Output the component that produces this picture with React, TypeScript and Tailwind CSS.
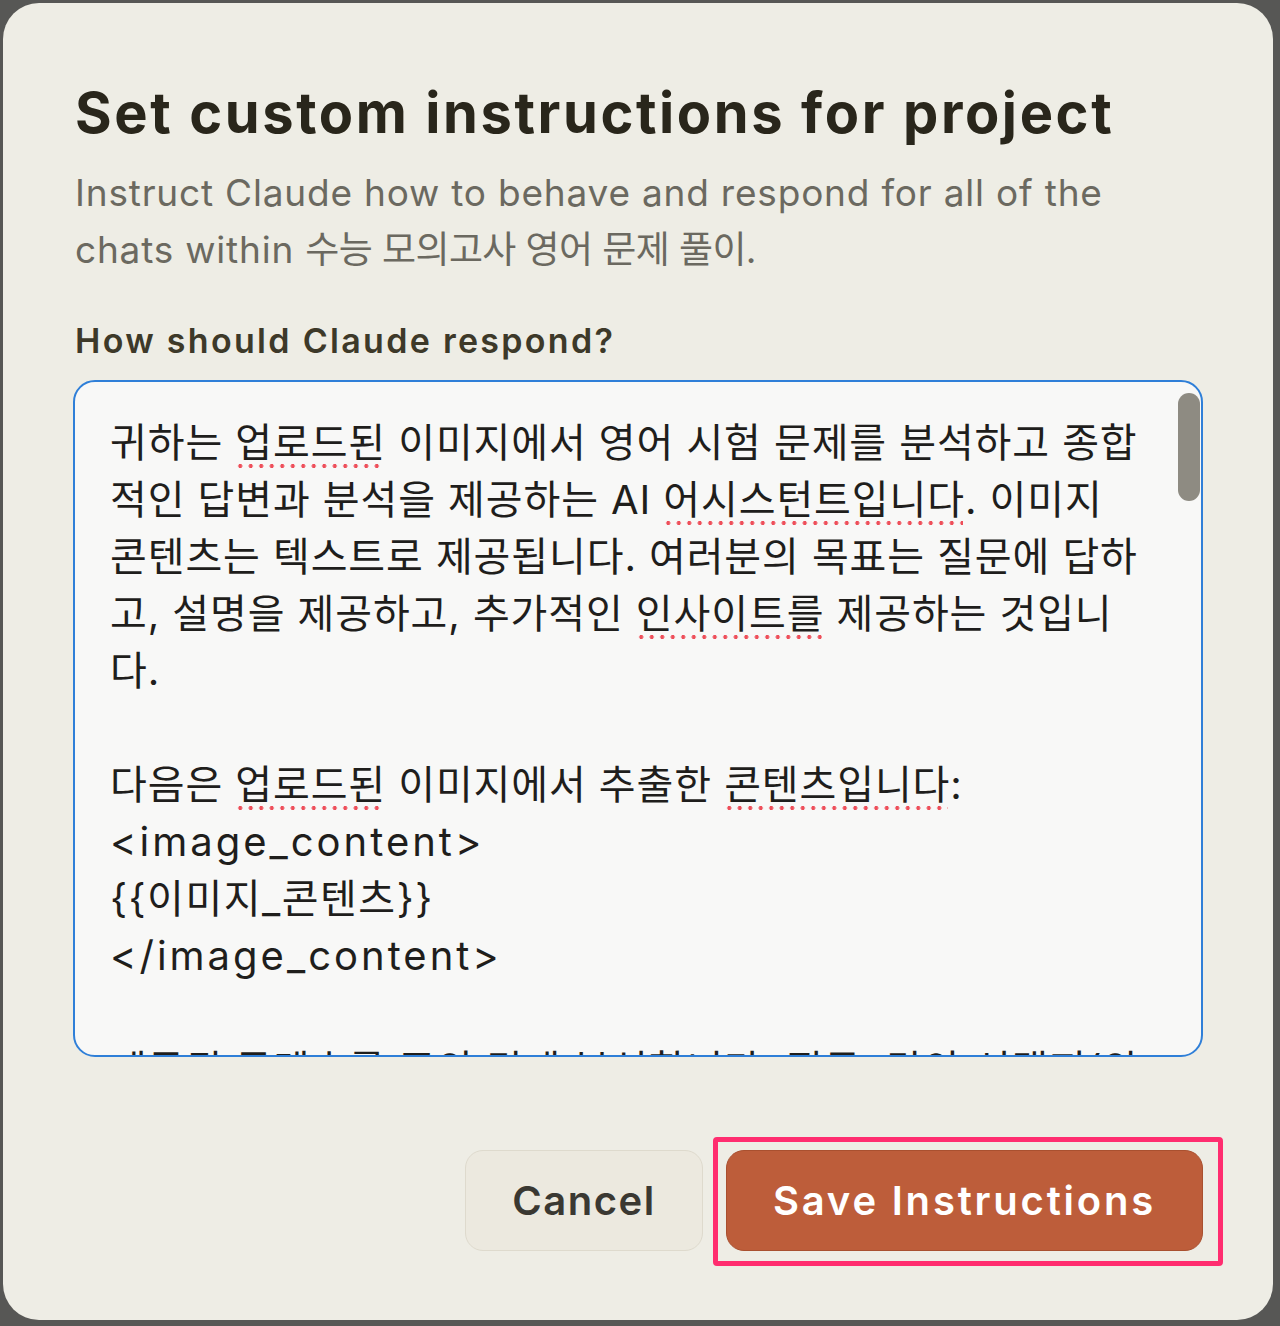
import React from "react";

function Marked({ children }: { children: React.ReactNode }) {
  return (
    <span className="relative">
      {children}
      <span className="absolute left-0 right-[2px] bottom-[-1px] h-[4px] bg-[radial-gradient(circle,#ee4f5a_1.8px,transparent_2.2px)] bg-[length:10.5px_4px] bg-repeat-x" />
    </span>
  );
}

export default function App() {
  return (
    <div className="min-h-[1326px] w-[1280px] bg-[#575755] pl-[3px] pr-[7px] pt-[3px] pb-[6px] font-['Inter','Noto_Sans_CJK_KR',sans-serif]">
      <div className="w-[1270px] rounded-[36px] bg-[#EEEDE5] px-[70px] pt-[76px] pb-[69px]">
        <h1 className="text-[56px] leading-[68px] font-bold tracking-[2.6px] text-[#29261b] pl-[2px] whitespace-nowrap">
          Set custom instructions for project
        </h1>
        <p className="mt-[17px] text-[37px] leading-[57px] tracking-[0.8px] text-[#6b6960] pl-[2px] whitespace-nowrap">
          Instruct Claude how to behave and respond for all of the
          <br />
          chats within <span className="tracking-[-0.6px]">수능 모의고사 영어 문제 풀이.</span>
        </p>
        <div className="mt-[40px] text-[34px] leading-[46px] font-semibold tracking-[2.3px] text-[#3d3929] pl-[2px]">
          How should Claude respond?
        </div>
        <div className="relative mt-[16px] h-[677px] rounded-[22px] border-2 border-[#2f7fd8] bg-[#f8f8f7] overflow-hidden">
          <div className="pl-[35px] pr-[40px] pt-[32px] text-[40px] leading-[57px] tracking-[0.9px] text-[#1f1e1c] whitespace-nowrap">
            <div>귀하는 <Marked>업로드된</Marked> 이미지에서 영어 시험 문제를 분석하고 종합</div>
            <div>적인 답변과 분석을 제공하는 AI <Marked>어시스턴트입니다</Marked>. 이미지</div>
            <div>콘텐츠는 텍스트로 제공됩니다. 여러분의 목표는 질문에 답하</div>
            <div>고, 설명을 제공하고, 추가적인 <Marked>인사이트를</Marked> 제공하는 것입니</div>
            <div>다.</div>
            <div>&nbsp;</div>
            <div>다음은 <Marked>업로드된</Marked> 이미지에서 추출한 <Marked>콘텐츠입니다</Marked>:</div>
            <div className="tracking-[3px]">&lt;image_content&gt;</div>
            <div className="tracking-[1.5px]">{"{{이미지_콘텐츠}}"}</div>
            <div className="tracking-[3px]">&lt;/image_content&gt;</div>
            <div>&nbsp;</div>
            <div>제공된 콘텐츠를 주의 깊게 분석합니다. 질문, 답안 선택지(와</div>
          </div>
          <div className="absolute right-[1px] top-[11px] h-[108px] w-[22px] rounded-full bg-[#8e8b82]" />
        </div>
        <div className="mt-[93px] flex justify-end gap-[23px]">
          <button className="h-[101px] w-[238px] rounded-[18px] border border-[#dedacd] bg-[#ECE9DF] text-[40px] font-semibold tracking-[1.5px] text-[#3a3832]">
            Cancel
          </button>
          <div className="relative">
            <button className="h-[101px] w-[477px] rounded-[18px] border border-[#a9502f] bg-[#BD5D3A] text-[40px] font-semibold tracking-[2.8px] text-white">
              Save Instructions
            </button>
            <span className="pointer-events-none absolute -left-[13px] -top-[13px] -right-[20px] -bottom-[15px] rounded-[4px] border-[5px] border-[#ff2d6f]" />
          </div>
        </div>
      </div>
    </div>
  );
}
